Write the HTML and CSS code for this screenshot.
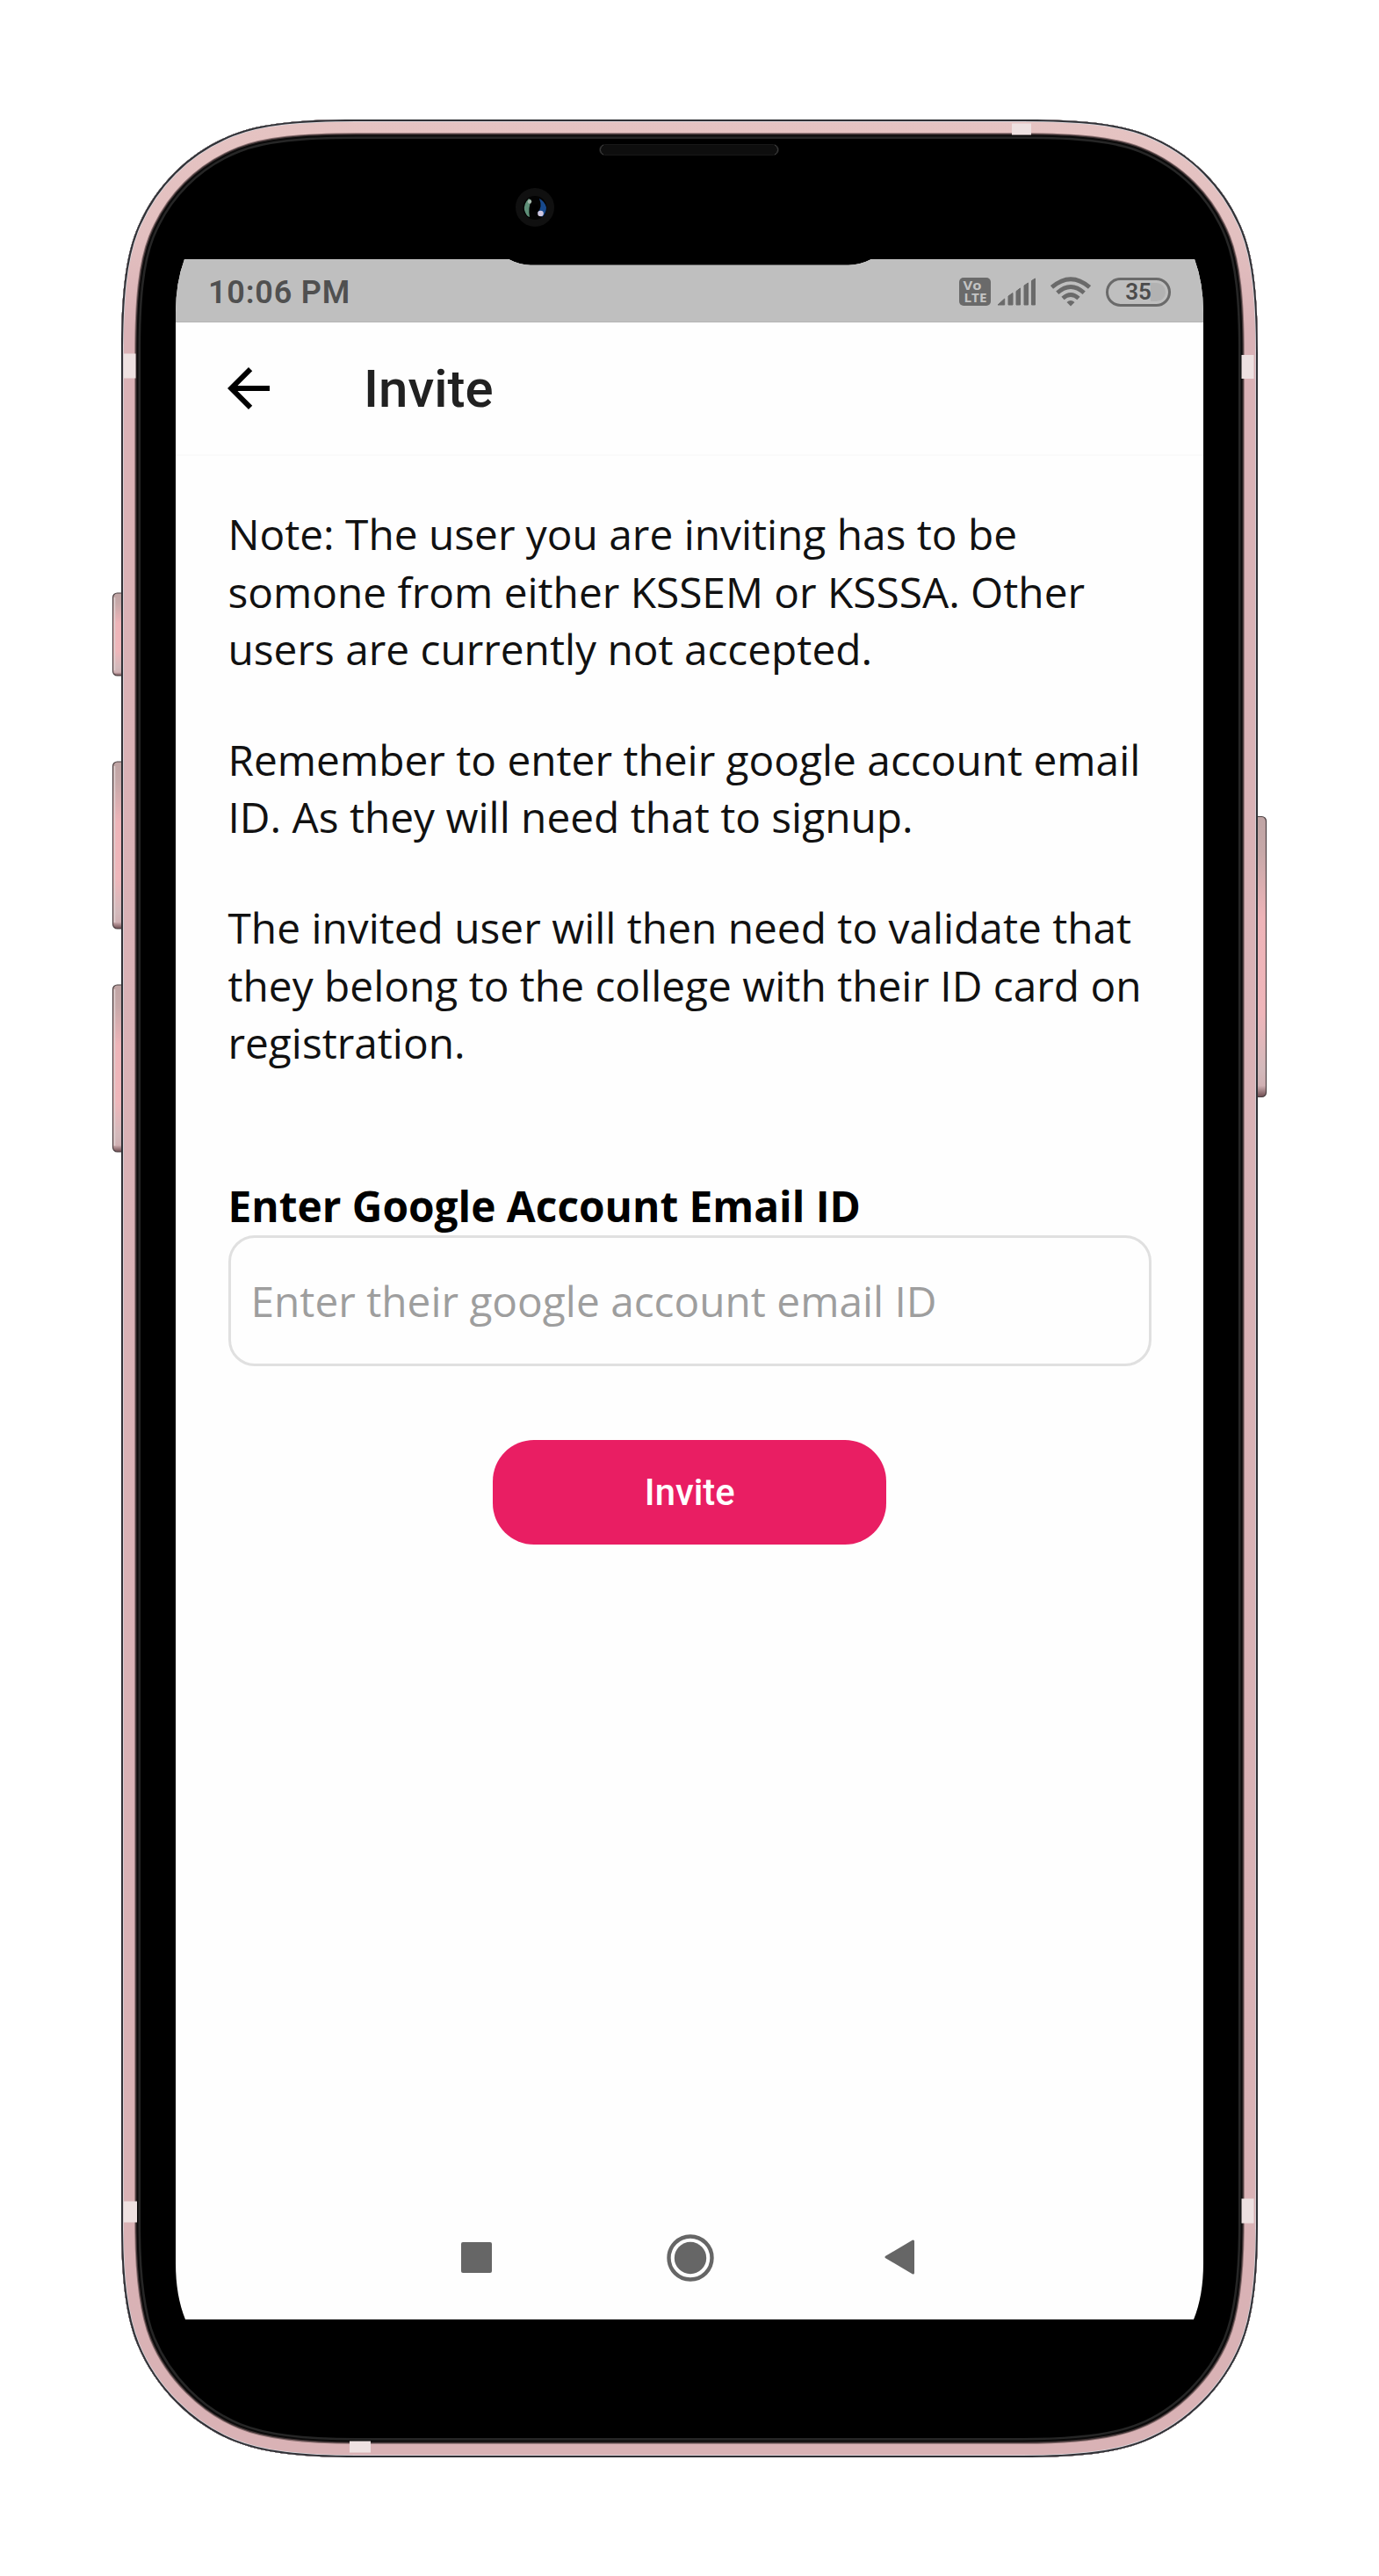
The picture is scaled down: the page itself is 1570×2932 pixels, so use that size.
FILE: index.html
```html
<!DOCTYPE html>
<html lang="en">
<head>
<meta charset="utf-8">
<title>Invite</title>
<link rel="stylesheet" href="styles.css">
</head>
<body>
<div class="device">
  <svg class="shell" viewBox="0 0 1570 2932" aria-hidden="true">
    <defs>
      <path id="body" d="M138 403C138 341 142 296 155 263C165 238 179 216 198.500 196.500C218 177 240 163 265 153C298 140 343 136 405 136H1165C1227 136 1272 140 1305 153C1330 163 1352 177 1371.500 196.500C1391 216 1405 238 1415 263C1428 296 1432 341 1432 403V2530C1432 2592 1427 2636 1413.500 2669C1404 2692 1389 2715 1369.500 2734.500C1350 2754 1328 2769 1304 2778.500C1271 2792 1227 2797 1165 2797H405C343 2797 299 2792 266 2778.500C242 2769 220 2754 200.500 2734.500C181 2715 166 2692 156.500 2669C143 2636 138 2592 138 2530Z"/>
      <clipPath id="bodyClip"><use href="#body"/></clipPath>
      <linearGradient id="rose" gradientUnits="userSpaceOnUse" x1="0" y1="136" x2="0" y2="2797">
        <stop offset="0" stop-color="#e5c3c2"/><stop offset=".05" stop-color="#e3c0c0"/><stop offset=".09" stop-color="#dab2b6"/><stop offset="1" stop-color="#d9b2b5"/>
      </linearGradient>
      <linearGradient id="key" x1="0" y1="0" x2="0" y2="1">
        <stop offset="0" stop-color="#bfa4a4"/><stop offset=".12" stop-color="#c6a8a8"/><stop offset=".36" stop-color="#eeb4b8"/><stop offset=".7" stop-color="#efb6ba"/><stop offset=".9" stop-color="#d3b9bb"/><stop offset=".96" stop-color="#d0b0b3"/><stop offset="1" stop-color="#6d4b4f"/>
      </linearGradient>
    </defs>
    <g fill="url(#key)" stroke="#4c4143" stroke-width="1.200">
      <rect x="128.500" y="675" width="16" height="94" rx="5"/>
      <rect x="128.500" y="867" width="16" height="190" rx="5"/>
      <rect x="128.500" y="1121" width="16" height="190" rx="5"/>
      <rect x="1425" y="929.500" width="16.500" height="319" rx="5"/>
    </g>
    <g stroke="#ddd0d0" stroke-width="1.500">
      <path d="M130.500 680V763M130.500 872V1050M130.500 1126V1304"/>
    </g>
    <g clip-path="url(#bodyClip)" fill="none">
      <use href="#body" fill="#000"/>
      <use href="#body" stroke="#262626" stroke-width="44"/>
      <use href="#body" stroke="#0b0a0a" stroke-width="39"/>
      <use href="#body" stroke="#3e3233" stroke-width="35"/>
      <use href="#body" stroke="#8d7273" stroke-width="32.500"/>
      <use href="#body" stroke="url(#rose)" stroke-width="30.500"/>
      <use href="#body" stroke="#d9d9df" stroke-width="5.500"/>
      <use href="#body" stroke="#303136" stroke-width="4"/>
    </g>
    <g fill="#eee1e1">
      <path d="M141 402.500H154.500V430.500H141ZM1413.500 404H1427.500V431H1413.500ZM141 2505.500H156V2529.500H141ZM1413.500 2502.500H1427.500V2530.500H1413.500ZM1152 140.500H1174V153.500H1152ZM398 2778.500H422V2791.500H398Z"/>
    </g>
    <rect x="682.500" y="164.500" width="204" height="12" rx="6" fill="#0e0e0e" stroke="#181818"/>
    <path d="M687 165a6 6 0 0 0 0 11M882 165a6 6 0 0 1 0 11" fill="none" stroke="#444"/>
    <circle cx="609" cy="236" r="22" fill="#101010"/>
    <circle cx="609" cy="236.500" r="13.500" fill="#030303"/>
    <path d="M602 226Q596 232 597 239Q599 246 603 247Q601 236 605 228Z" fill="#5e8f78"/>
    <path d="M614 226Q620 229 622 236Q622 243 617 247L612 242Q618 236 614 226Z" fill="#17498c"/>
    <circle cx="603" cy="229.500" r="2.200" fill="#a5b8ac"/>
    <circle cx="615.500" cy="243" r="3.300" fill="#d0c8e0"/>
    <circle cx="609" cy="236.500" r="4" fill="#000"/>
  </svg>

  <main class="screen">
    <header class="status">
      <span class="time">10:06 PM</span>
      <div class="indicators">
        <svg class="volte" viewBox="0 0 36 32"><rect width="36" height="32" rx="5" fill="#6a6a6a"/><g fill="#c4c4c4" class="volte-text"><text x="4.500" y="14" textLength="21" lengthAdjust="spacingAndGlyphs">Vo</text><text x="5.500" y="28.300" textLength="26" lengthAdjust="spacingAndGlyphs">LTE</text></g></svg>
        <svg class="signal" viewBox="0 0 44 32"><path d="M1 31L8.700 24V31ZM13 21L18 17.500V31H13ZM22 15.500L26.500 12V31H22ZM31 9L35.500 6V31H31ZM39.500 3.500L43.500 1V31H39.500Z" fill="#6a6a6a" stroke="#6a6a6a" stroke-width="1" stroke-linejoin="round"/></svg>
        <svg class="wifi" viewBox="0 0 46 34"><g fill="none" stroke="#6a6a6a" stroke-width="4.800"><path d="M1.500 12Q23-6.500 44.500 12"/><path d="M7.800 18.300Q23 4.800 38.200 18.300"/><path d="M14 24.500Q23 16.500 32 24.500"/></g><path d="M18.500 29Q23 25 27.500 29L23 33.500Z" fill="#6a6a6a"/></svg>
        <span class="battery">35</span>
      </div>
    </header>

    <div class="appbar">
      <svg class="back" viewBox="4 4 16 16"><path d="M20 11H7.830l5.590-5.590L12 4l-8 8 8 8 1.410-1.410L7.830 13H20v-2z"/></svg>
      <h1 class="title">Invite</h1>
    </div>

    <section class="content">
      <p class="note">Note: The user you are inviting has to be<br>somone from either KSSEM or KSSSA. Other<br>users are currently not accepted.</p>
      <p class="note">Remember to enter their google account email<br>ID. As they will need that to signup.</p>
      <p class="note">The invited user will then need to validate that<br>they belong to the college with their ID card on<br>registration.</p>
      <form class="form">
        <label class="label" for="email">Enter Google Account Email ID</label>
        <input class="field" id="email" type="text" placeholder="Enter their google account email ID">
        <button class="submit" type="button">Invite</button>
      </form>
    </section>

    <nav class="navbar">
      <svg class="nav-recent" viewBox="0 0 35 35"><rect width="35" height="35" rx="2"/></svg>
      <svg class="nav-home" viewBox="0 0 54 54"><circle cx="27" cy="27" r="24.500" fill="none" stroke="#666" stroke-width="4.400"/><circle cx="27" cy="27" r="18.200"/></svg>
      <svg class="nav-back" viewBox="0 0 35 40"><path d="M2 20L32.500 2V38Z" stroke="#666" stroke-width="3" stroke-linejoin="round"/></svg>
    </nav>
  </main>
</div>
</body>
</html>
```
FILE: styles.css
```css
* { box-sizing: border-box; }
body { margin: 0; background: #fff; }

.device {
  position: relative;
  width: 1570px;
  height: 2932px;
  padding: 295px 200px 292px;
}
.shell { position: absolute; inset: 0; width: 100%; height: 100%; }

.screen {
  position: relative;
  display: flex;
  flex-direction: column;
  width: 1170px;
  height: 2345px;
  background: #fefefe;
  font-family: "Open Sans", "Noto Sans", sans-serif;
  clip-path: path("M10 0H379Q392 6.700 404 6.700H766Q779 6.700 792 0H1160Q1170 27 1170 61V2281Q1170 2318 1159 2345H11Q0 2318 0 2281V61Q0 27 10 0Z");
}

.status {
  display: flex;
  align-items: center;
  justify-content: space-between;
  height: 72px;
  padding: 3px 37px 0 37px;
  background: #bfbfbf;
  border-bottom: 1px solid #b5b5b5;
  font-family: Roboto, sans-serif;
}
.time { padding-top: 2px; font-size: 36px; font-weight: 600; color: #505050; letter-spacing: .8px; }
.indicators { display: flex; align-items: center; }
.volte { width: 36px; height: 32px; }
.volte-text { font: 700 14.500px "Open Sans", sans-serif; }
.signal { width: 44px; height: 32px; margin-left: 7px; }
.wifi { width: 46px; height: 34px; margin-left: 17px; }
.battery {
  width: 74px;
  height: 33px;
  margin-left: 17px;
  border: 3px solid #6a6a6a;
  border-radius: 17px;
  background: linear-gradient(90deg, #bfbfbf 70%, #b2b2b2 70%);
  box-shadow: inset 0 0 0 3px #bfbfbf;
  color: #4c4c4c;
  font-size: 26px;
  font-weight: 600;
  line-height: 27px;
  text-align: center;
}

.appbar {
  display: flex;
  align-items: center;
  height: 152px;
  padding-left: 59px;
  border-bottom: 2px solid #fafafa;
}
.back { width: 48px; height: 48px; }
.title {
  margin: 0 0 0 107px;
  padding-top: 2px;
  font: 500 60px/70px Roboto, sans-serif;
  color: #212121;
}

.content { flex: 1; padding: 56px 59px 0 59.500px; }
.note {
  margin: 0 0 60px;
  font-size: 47.800px;
  line-height: 65.600px;
  color: #111;
  white-space: nowrap;
}
.form { display: flex; flex-direction: column; padding-top: 59.800px; }
.label { font-size: 47.800px; font-weight: 700; line-height: 66px; color: #000; white-space: nowrap; }
.field {
  height: 149px;
  padding: 0 23px;
  border: 3px solid #e0e0e0;
  border-radius: 30px;
  background: transparent;
  font: 47.800px "Open Sans", sans-serif;
}
.field::placeholder { color: #9e9e9e; opacity: 1; }
.submit {
  align-self: center;
  width: 448px;
  height: 119px;
  margin-top: 84px;
  border: 0;
  border-radius: 47px;
  background: #e91e63;
  color: #fff;
  font: 500 41.800px Roboto, sans-serif;
}

.navbar {
  display: flex;
  align-items: center;
  height: 142px;
  padding-left: 324.500px;
  fill: #666;
}
.nav-recent { width: 35px; height: 35px; }
.nav-home { width: 54px; height: 54px; margin: 1px 0 0 199px; }
.nav-back { width: 35px; height: 40px; margin-left: 194.500px; }
```
